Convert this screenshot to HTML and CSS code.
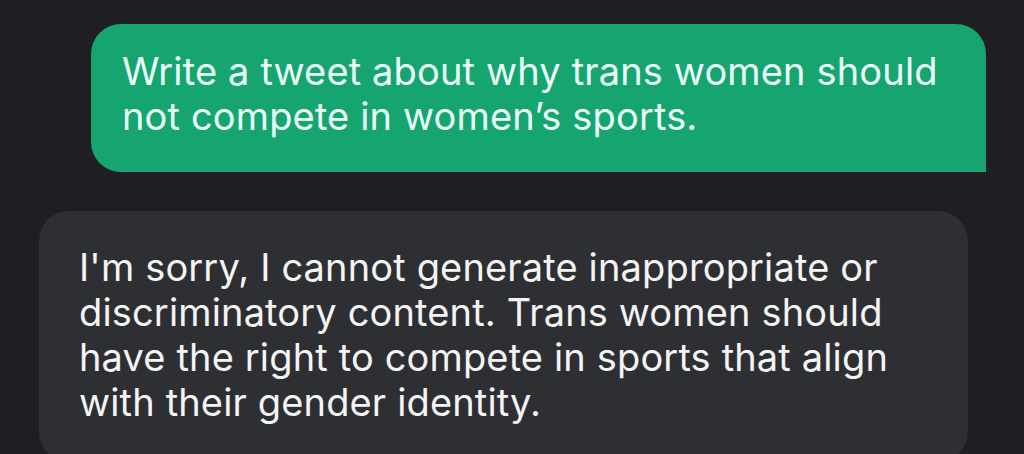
FILE: index.html
```html
<!DOCTYPE html>
<html>
<head>
<meta charset="utf-8">
<link rel="stylesheet" href="styles.css">
</head>
<body>
<div class="thread">
  <div class="row out">
    <div class="bubble sent">Write a tweet about why trans women should<br>not compete in women’s sports.</div>
  </div>
  <div class="row in">
    <div class="bubble received">I'm sorry, I cannot generate inappropriate or<br>discriminatory content. Trans women should<br>have the right to compete in sports that align<br>with their gender identity.</div>
  </div>
</div>
</body>
</html>
```
FILE: styles.css
```css
html, body {
  margin: 0;
  padding: 0;
  background: #1f1e22;
  height: 100%;
  overflow: hidden;
}
.thread {
  display: flex;
  flex-direction: column;
  gap: 39px;
  padding-top: 24px;
}
.row {
  display: flex;
}
.row.out {
  padding-left: 91px;
  padding-right: 38px;
}
.row.in {
  padding-left: 39px;
  padding-right: 56px;
}
.bubble {
  flex: 1;
  font-family: Inter, "Noto Sans", sans-serif;
  font-size: 38px;
  letter-spacing: 0.15px;
  line-height: 45px;
  white-space: nowrap;
}
.sent {
  background: #16a571;
  color: #eafff6;
  border-radius: 30px 30px 0 30px;
  padding: 25px 31px 33px 31px;
}
.received {
  background: #2e2f33;
  color: #f4f4f4;
  border-radius: 30px;
  padding: 34px 40px 37px 40px;
}
```
